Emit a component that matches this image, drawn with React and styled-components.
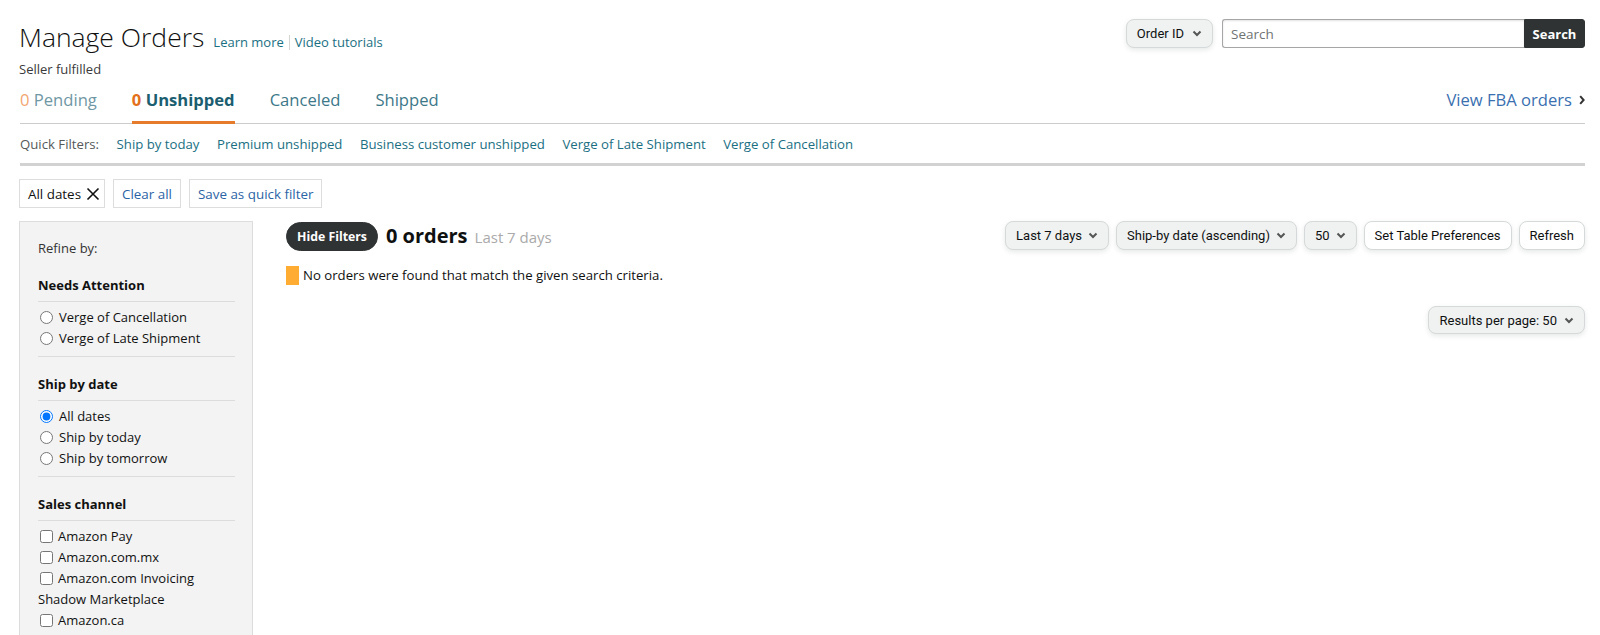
import React from 'react';
import styled, { createGlobalStyle } from 'styled-components';

const GlobalStyle = createGlobalStyle`
  body {
    margin: 0;
    background: #ffffff;
    color: #0f1111;
    font-family: "Open Sans", Arial, sans-serif;
  }
`;

const Page = styled.div`
  width: 1600px;
  min-height: 635px;
  box-sizing: border-box;
  padding: 19px 15px 0 19px;
  overflow: hidden;
`;

const Header = styled.div`
  display: flex;
  justify-content: space-between;
  align-items: flex-start;
`;

const TitleRow = styled.div`
  display: flex;
  align-items: baseline;
  margin-top: 1px;
`;

const Title = styled.h1`
  margin: 0;
  font-size: 26.5px;
  font-weight: 300;
  line-height: 34px;
  color: #111;
`;

const HeaderLinks = styled.div`
  display: flex;
  align-items: center;
  margin-left: 9px;
  font-size: 13px;
`;

const TealLink = styled.a`
  color: #1a6f83;
  text-decoration: none;
  cursor: pointer;
`;

const Divider = styled.span`
  display: inline-block;
  width: 1px;
  height: 15px;
  background: #d5d5d5;
  margin: 0 5px;
`;

const Subtitle = styled.div`
  margin-top: 6px;
  font-size: 13px;
  line-height: 18px;
  color: #3a3a3a;
`;

const SearchGroup = styled.div`
  display: flex;
  align-items: center;
`;

const DropButton = styled.button`
  display: flex;
  align-items: center;
  gap: ${(p) => (p.$gap ? p.$gap : 6)}px;
  height: ${(p) => (p.$h ? p.$h : 29)}px;
  padding: 0 10px;
  box-sizing: border-box;
  border: 1px solid #d5d9d9;
  border-radius: 8px;
  background: ${(p) => (p.$plain ? '#ffffff' : '#f0f2f2')};
  box-shadow: 0 2px 5px 0 rgba(213, 217, 217, 0.6);
  color: #0f1111;
  font-family: Roboto, Arial, sans-serif;
  font-size: 13px;
  white-space: nowrap;
  cursor: pointer;
`;

const SearchInput = styled.input`
  width: 302px;
  height: 29px;
  box-sizing: border-box;
  margin-left: 9px;
  padding: 0 8px;
  border: 1px solid #a6a6a6;
  border-right: none;
  border-radius: 3px 0 0 3px;
  box-shadow: inset 0 1px 2px rgba(15, 17, 17, 0.12);
  font-family: "Open Sans", Arial, sans-serif;
  font-size: 13.5px;
  outline: none;
  &::placeholder {
    color: #6f7373;
  }
`;

const SearchButton = styled.button`
  width: 61px;
  height: 29px;
  border: 1px solid #303333;
  border-radius: 0 3px 3px 0;
  background: #303333;
  color: #ffffff;
  font-family: "Open Sans", Arial, sans-serif;
  font-size: 13px;
  font-weight: 700;
  cursor: pointer;
`;

const TabBar = styled.div`
  display: flex;
  align-items: flex-start;
  gap: 35px;
  margin-top: 2px;
  margin-left: 1px;
  border-bottom: 1px solid #cccccc;
`;

const Tab = styled.div`
  height: 44px;
  box-sizing: border-box;
  margin-bottom: -1px;
  padding-top: 8px;
  font-size: 16.6px;
  line-height: 23px;
  font-weight: ${(p) => (p.$active ? 700 : 400)};
  color: ${(p) => (p.$active ? '#1b5e70' : p.$dim ? '#6f97a4' : '#3d7889')};
  border-bottom: 3px solid ${(p) => (p.$active ? '#e77b2c' : 'transparent')};
  white-space: nowrap;
  cursor: pointer;
`;

const Count = styled.span`
  color: ${(p) => (p.$active ? '#e3701a' : '#f2a671')};
`;

const FbaLink = styled.a`
  display: flex;
  align-items: center;
  gap: 7px;
  margin-left: auto;
  height: 23px;
  padding-top: 8px;
  font-size: 16.6px;
  line-height: 23px;
  color: #3a6fb0;
  text-decoration: none;
  cursor: pointer;
`;

const QuickFilters = styled.div`
  display: flex;
  align-items: center;
  gap: 17.5px;
  height: 39px;
  margin-left: 1px;
  border-bottom: 3px solid #d2d2d2;
  font-size: 13.2px;
`;

const QuickLabel = styled.span`
  color: #565959;
`;

const ChipRow = styled.div`
  display: flex;
  gap: 8px;
  margin-top: 13px;
`;

const Chip = styled.div`
  display: flex;
  align-items: center;
  gap: 5px;
  height: 29px;
  box-sizing: border-box;
  padding: 0 ${(p) => (p.$close ? 4 : 8)}px 0 8px;
  border: 1px solid #dddddd;
  font-size: 13.4px;
  color: ${(p) => (p.$link ? '#2b64a6' : '#111')};
  cursor: pointer;
`;

const Body = styled.div`
  display: flex;
  align-items: flex-start;
  gap: 33px;
  margin-top: 13px;
`;

const Sidebar = styled.aside`
  width: 234px;
  min-height: 430px;
  box-sizing: border-box;
  flex-shrink: 0;
  padding: 17px 17px 0 18px;
  border: 1px solid #dddddd;
  background: #f3f3f3;
`;

const RefineLabel = styled.div`
  font-size: 13px;
  line-height: 18px;
  color: #333;
`;

const SectionTitle = styled.div`
  margin-top: ${(p) => (p.$first ? 19 : 18)}px;
  padding-bottom: 7px;
  border-bottom: 1px solid #dcdcdc;
  font-size: 13px;
  font-weight: 700;
  line-height: 18px;
  color: #111;
`;

const OptionList = styled.div`
  padding: 5px 0 7px;
  border-bottom: ${(p) => (p.$last ? 'none' : '1px solid #dcdcdc')};
`;

const Option = styled.label`
  display: block;
  font-size: 13px;
  line-height: 21px;
  color: #111;

  input {
    width: 13px;
    height: 13px;
    margin: 0 ${(p) => (p.$box ? 5 : 6)}px 0 2px;
    vertical-align: -2px;
  }
`;

const Main = styled.main`
  flex: 1;
  display: flex;
  flex-direction: column;
`;

const TopRow = styled.div`
  display: flex;
  justify-content: space-between;
  align-items: flex-start;
`;

const LeftGroup = styled.div`
  display: flex;
  align-items: center;
`;

const PillButton = styled.button`
  height: 29px;
  padding: 0 10px;
  border: 1px solid #303333;
  border-radius: 15px;
  background: #303333;
  color: #ffffff;
  font-family: "Open Sans", Arial, sans-serif;
  font-size: 12.3px;
  font-weight: 700;
  cursor: pointer;
`;

const OrdersTitle = styled.h2`
  margin: 0 0 0 8px;
  font-size: 20px;
  font-weight: 700;
  line-height: 29px;
  color: #0f1111;
`;

const OrdersPeriod = styled.span`
  margin-left: 7px;
  font-size: 15px;
  font-weight: 400;
  color: #aaaaaa;
`;

const Toolbar = styled.div`
  display: flex;
  gap: 7px;
`;

const Message = styled.div`
  display: flex;
  align-items: center;
  gap: 4px;
  margin-top: 14px;
  font-size: 13.2px;
  line-height: 19px;
`;

const WarnMark = styled.span`
  width: 13px;
  height: 19px;
  background: #ffac33;
`;

const ResultsRow = styled.div`
  display: flex;
  justify-content: flex-end;
  margin-top: 21px;
`;

function ChevronDown() {
  return (
    <svg width="10" height="7" viewBox="0 0 10 7">
      <path d="M1.5 1.5 L5 5 L8.5 1.5" fill="none" stroke="#555" strokeWidth="2" />
    </svg>
  );
}

function ChevronRight() {
  return (
    <svg width="6" height="10" viewBox="0 0 6 10">
      <path d="M1.2 1.2 L4.6 5 L1.2 8.8" fill="none" stroke="#333" strokeWidth="2" />
    </svg>
  );
}

function CloseIcon() {
  return (
    <svg width="14" height="14" viewBox="0 0 14 14">
      <path d="M1.5 1.5 L12.5 12.5 M12.5 1.5 L1.5 12.5" stroke="#111" strokeWidth="1.6" />
    </svg>
  );
}

const quickFilters = [
  'Ship by today',
  'Premium unshipped',
  'Business customer unshipped',
  'Verge of Late Shipment',
  'Verge of Cancellation',
];

const salesChannels = [
  'Amazon Pay',
  'Amazon.com.mx',
  'Amazon.com Invoicing Shadow Marketplace',
  'Amazon.ca',
];

function App() {
  return (
    <>
      <GlobalStyle />
      <Page>
        <Header>
          <div>
            <TitleRow>
              <Title>Manage Orders</Title>
              <HeaderLinks>
                <TealLink>Learn more</TealLink>
                <Divider />
                <TealLink>Video tutorials</TealLink>
              </HeaderLinks>
            </TitleRow>
            <Subtitle>Seller fulfilled</Subtitle>
          </div>
          <SearchGroup>
            <DropButton $gap={8}>
              Order ID <ChevronDown />
            </DropButton>
            <SearchInput placeholder="Search" />
            <SearchButton>Search</SearchButton>
          </SearchGroup>
        </Header>

        <TabBar>
          <Tab $dim>
            <Count>0</Count> Pending
          </Tab>
          <Tab $active>
            <Count $active>0</Count> Unshipped
          </Tab>
          <Tab>Canceled</Tab>
          <Tab>Shipped</Tab>
          <FbaLink>
            View FBA orders <ChevronRight />
          </FbaLink>
        </TabBar>

        <QuickFilters>
          <QuickLabel>Quick Filters:</QuickLabel>
          {quickFilters.map((f) => (
            <TealLink key={f}>{f}</TealLink>
          ))}
        </QuickFilters>

        <ChipRow>
          <Chip $close>
            All dates <CloseIcon />
          </Chip>
          <Chip $link>Clear all</Chip>
          <Chip $link>Save as quick filter</Chip>
        </ChipRow>

        <Body>
          <Sidebar>
            <RefineLabel>Refine by:</RefineLabel>

            <SectionTitle $first>Needs Attention</SectionTitle>
            <OptionList>
              <Option>
                <input type="radio" name="attention" />
                Verge of Cancellation
              </Option>
              <Option>
                <input type="radio" name="attention" />
                Verge of Late Shipment
              </Option>
            </OptionList>

            <SectionTitle>Ship by date</SectionTitle>
            <OptionList>
              <Option>
                <input type="radio" name="shipby" defaultChecked />
                All dates
              </Option>
              <Option>
                <input type="radio" name="shipby" />
                Ship by today
              </Option>
              <Option>
                <input type="radio" name="shipby" />
                Ship by tomorrow
              </Option>
            </OptionList>

            <SectionTitle>Sales channel</SectionTitle>
            <OptionList $last>
              {salesChannels.map((c) => (
                <Option $box key={c}>
                  <input type="checkbox" />
                  {c}
                </Option>
              ))}
            </OptionList>
          </Sidebar>

          <Main>
            <TopRow>
              <LeftGroup>
                <PillButton>Hide Filters</PillButton>
                <OrdersTitle>
                  0 orders<OrdersPeriod>Last 7 days</OrdersPeriod>
                </OrdersTitle>
              </LeftGroup>
              <Toolbar>
                <DropButton>
                  Last 7 days <ChevronDown />
                </DropButton>
                <DropButton>
                  Ship-by date (ascending) <ChevronDown />
                </DropButton>
                <DropButton>
                  50 <ChevronDown />
                </DropButton>
                <DropButton $plain>Set Table Preferences</DropButton>
                <DropButton $plain>Refresh</DropButton>
              </Toolbar>
            </TopRow>

            <Message>
              <WarnMark />
              No orders were found that match the given search criteria.
            </Message>

            <ResultsRow>
              <DropButton $h={28} $gap={7}>
                Results per page: 50 <ChevronDown />
              </DropButton>
            </ResultsRow>
          </Main>
        </Body>
      </Page>
    </>
  );
}

export default App;
